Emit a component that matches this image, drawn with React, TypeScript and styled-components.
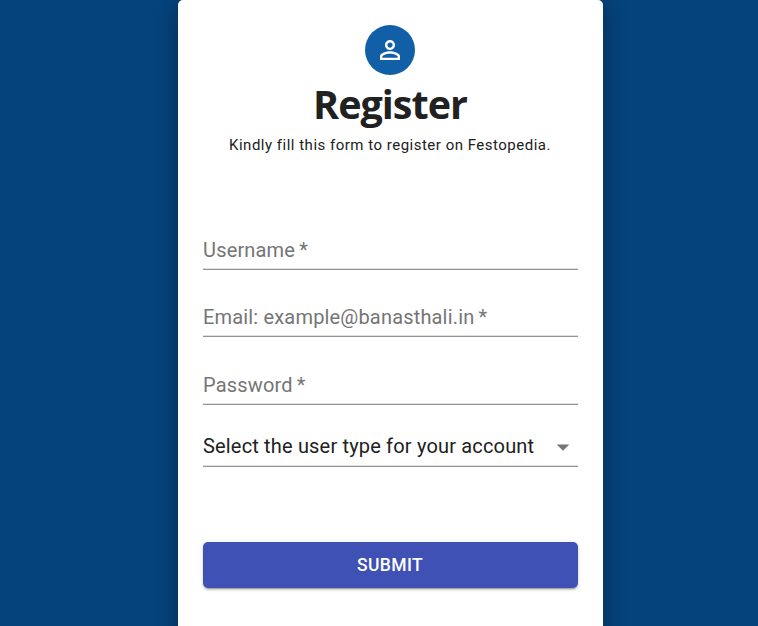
import React from "react";
import styled, { createGlobalStyle } from "styled-components";

const GlobalStyle = createGlobalStyle`
  * { box-sizing: border-box; }
  html, body { margin: 0; height: 626px; overflow: hidden; background: #05437c; }
`;
const Page = styled.main`
  display: flex;
  justify-content: center;
  width: 758px;
  height: 626px;
  padding-left: 23px;
  overflow: hidden;
  font-family: Roboto, sans-serif;
  color: #212121;
`;
const Card = styled.form`
  display: flex;
  flex-direction: column;
  width: 425px;
  height: 660px;
  padding: 25px;
  background: #fff;
  border-radius: 5px;
  box-shadow: 0 4px 25px rgba(0, 0, 0, 0.35);
`;
const Header = styled.header`
  display: flex;
  flex-direction: column;
  align-items: center;
  height: 209px;
  padding-right: 1px;
`;
const Avatar = styled.div`
  display: grid;
  place-items: center;
  width: 50px;
  height: 50px;
  border-radius: 50%;
  background: #115fa6;
`;
const Title = styled.h1`
  margin: 0;
  font: 700 39.5px/58px "Open Sans", sans-serif;
  letter-spacing: -1px;
`;
const Caption = styled.p`
  margin: 1px 0 0;
  font-size: 15px;
  line-height: 22px;
  letter-spacing: 0.5px;
  white-space: nowrap;
`;
const Field = styled.div<{ $gap: number; $dark?: boolean }>`
  display: flex;
  align-items: center;
  justify-content: space-between;
  height: 36px;
  margin-bottom: ${(p) => p.$gap}px;
  padding-bottom: ${(p) => (p.$dark ? 5 : 3)}px;
  border-bottom: 1px solid #949494;
  box-shadow: inset 0 -1px #dfdfdf;
  font-size: 20px;
  letter-spacing: 0.17px;
  white-space: pre;
  color: ${(p) => (p.$dark ? "#212121" : "#757575")};
`;
const Required = styled.span`
  margin-left: -1px;
`;
const Arrow = styled.svg`
  margin-top: 2px;
`;
const Submit = styled.button`
  height: 46px;
  padding: 0 1px 0 0;
  border: 0;
  border-radius: 5px;
  background: #3f51b5;
  color: #fff;
  font: 500 17.5px Roboto, sans-serif;
  letter-spacing: 0.4px;
  box-shadow: 0 3px 1px -2px rgba(0,0,0,.2), 0 2px 2px rgba(0,0,0,.14), 0 1px 5px rgba(0,0,0,.12);
`;

export default function App() {
  return (
    <Page>
      <GlobalStyle />
      <Card>
        <Header>
          <Avatar>
            <svg width="30" height="30" viewBox="0 0 24 24" fill="#fff">
              <path d="M12 5.9c1.16 0 2.1.94 2.1 2.1s-.94 2.1-2.1 2.1S9.9 9.16 9.9 8s.94-2.1 2.1-2.1m0 9c2.97 0 6.1 1.46 6.1 2.1v1.1H5.9V17c0-.64 3.13-2.1 6.1-2.1M12 4C9.79 4 8 5.79 8 8s1.79 4 4 4 4-1.79 4-4-1.79-4-4-4zm0 9c-2.67 0-8 1.34-8 4v3h16v-3c0-2.66-5.33-4-8-4z" />
            </svg>
          </Avatar>
          <Title>Register</Title>
          <Caption>Kindly fill this form to register on Festopedia.</Caption>
        </Header>
        <Field $gap={31}><span>Username<Required> *</Required></span></Field>
        <Field $gap={32}><span>Email: example@banasthali.in<Required> *</Required></span></Field>
        <Field $gap={26}><span>Password<Required> *</Required></span></Field>
        <Field $gap={75} $dark>
          <span>Select the user type for your account</span>
          <Arrow width="30" height="30" viewBox="0 0 24 24" fill="#757575">
            <path d="M7 10l5 5 5-5z" />
          </Arrow>
        </Field>
        <Submit type="button">SUBMIT</Submit>
      </Card>
    </Page>
  );
}
